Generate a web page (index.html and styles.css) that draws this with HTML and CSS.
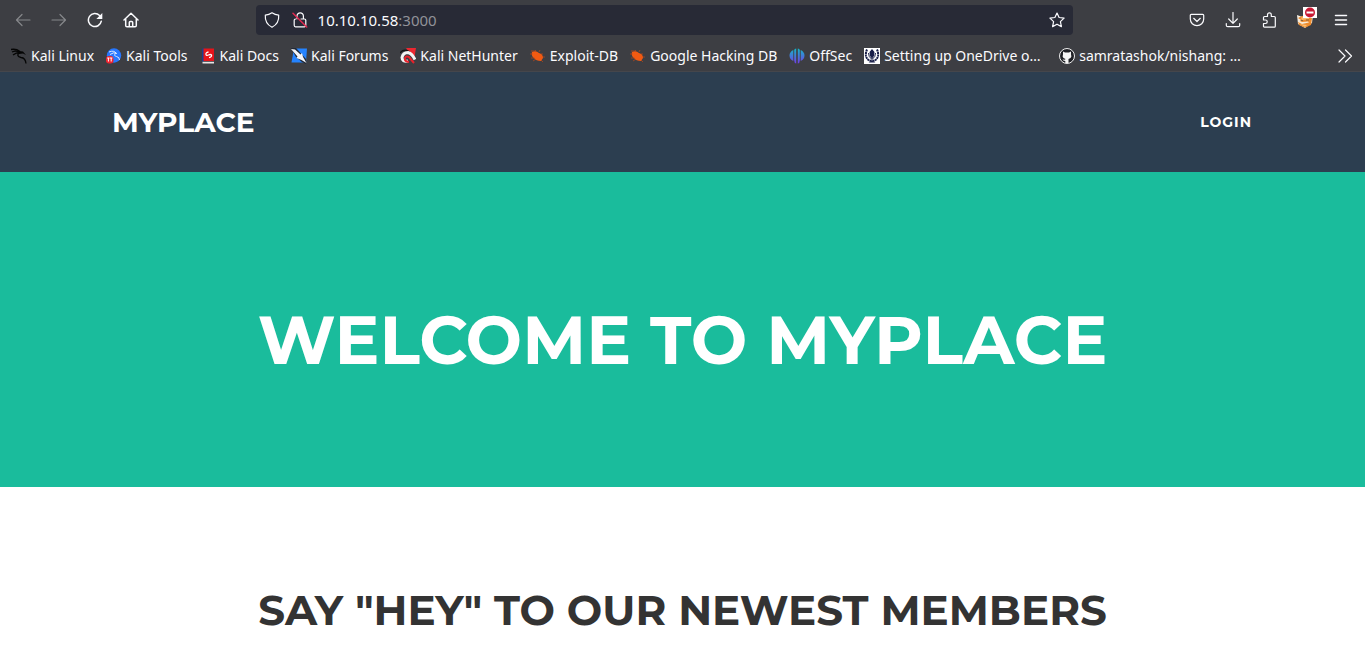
FILE: index.html
```html
<!DOCTYPE html>
<html lang="en">
<head>
<meta charset="utf-8">
<title>MyPlace</title>
<link rel="stylesheet" href="styles.css">
</head>
<body>
<div class="browser">
  <div class="toolbar">
    <div class="tool-group">
      <button class="tool dim" aria-label="Back"><svg class="line" viewBox="0 0 16 16"><path d="M15 8H1.500M7 2.500 1.500 8 7 13.500"/></svg></button>
      <button class="tool dim" aria-label="Forward"><svg class="line" viewBox="0 0 16 16"><path d="M1 8h13.500M9 2.500 14.500 8 9 13.500"/></svg></button>
      <button class="tool" aria-label="Reload"><svg class="line bold" viewBox="0 0 16 16"><path d="M14.300 9.200A6.500 6.500 0 1 1 12.600 3.600"/><path class="solid" d="M15.300 1v6H9.300z"/></svg></button>
      <button class="tool" aria-label="Home"><svg class="line bold" viewBox="0 0 16 16"><path d="M1 8 8 1.300 15 8M2.700 7v6.500q0 1.300 1.300 1.300h8q1.300 0 1.300-1.300V7M6.300 14.500v-4q0-1 1-1h1.400q1 0 1 1v4"/></svg></button>
    </div>
    <div class="address">
      <button class="mini" aria-label="Tracking protection"><svg class="line" viewBox="0 0 16 16"><path d="M8 .8q3 2 6.700 2.300Q15.300 11.500 8 15.300.700 11.500 1.300 3.100 5 2.800 8 .8z"/></svg></button>
      <button class="mini" aria-label="Connection not secure"><svg class="line" viewBox="0 0 16 16"><path d="M5 6.800V4a3.200 3.200 0 0 1 6.400 0v2.800M9 7h3.500q1.300 0 1.300 1.300v5q0 1.500-1.300 1.500h-9q-1.300 0-1.300-1.500v-5Q2.200 7 3.500 7"/><path class="slash" d="M1 1.300 14.700 15"/></svg></button>
      <div class="url">10.10.10.58<span class="port">:3000</span></div>
      <button class="mini" aria-label="Bookmark this page"><svg class="line" viewBox="0 0 16 16"><path d="m8 1 2.100 4.500 5 .6-3.700 3.500 1 5L8 12.200l-4.400 2.400 1-5L.9 6.100l5-.6z"/></svg></button>
    </div>
    <div class="tool-group actions">
      <button class="tool" aria-label="Save to Pocket"><svg class="line" viewBox="0 0 16 16"><path d="M2.300 2.300h11.400q1 0 1 1V7a6.700 6.700 0 0 1-13.400 0V3.300q0-1 1-1zM4.700 6.300 8 9.500l3.300-3.200"/></svg></button>
      <button class="tool" aria-label="Downloads"><svg class="line" viewBox="0 0 16 16"><path d="M8 .5V11M3.700 7 8 11.300 12.300 7M1.300 11.500v1.700q0 1.500 1.500 1.500h10.400q1.500 0 1.500-1.500v-1.700"/></svg></button>
      <button class="tool" aria-label="Extensions"><svg class="line" viewBox="0 0 16 16"><path d="M2.500 8V5.500q0-1 1-1h3V2.700a1.900 1.900 0 0 1 3.800 0v1.800h3q1 0 1 1v8.700q0 1-1 1H3.500q-1 0-1-1v-2.700h2a1.750 1.750 0 0 0 0-3.500z"/></svg></button>
      <button class="tool fox" aria-label="Proxy, disabled"><svg viewBox="0 0 16 16"><path fill="#f7f0e4" d="m0 3 4 1.500h9L16 3l-1 8-7 5-7-4z"/><path fill="#ee8b2d" d="m1 6 4-2h7l3 2-1 7-6 2.800L2 13l-1-3 3-2z"/><path fill="#f9bd70" d="m4 5.500 8-1v2.500l-7 1zM3 12l7 1-2 2z"/><path fill="#f7ead6" d="m1 8 4 2 6-.5 1 1-7 1.500-4-2z"/><path fill="#8c6538" d="M4 8h2v1H4zM9 7.500h3v1H9z"/></svg><svg class="badge" viewBox="0 0 14 11"><path fill="#fff" d="M0 0h14v11H0z"/><circle cx="7" cy="5.500" r="5" fill="#c81934"/><path fill="#fff" d="M3.500 4.500h7v2h-7z"/></svg></button>
      <button class="tool" aria-label="Menu"><svg class="line bold" viewBox="0 0 16 16"><path d="M2.500 3.500h11M2.500 8h11M2.500 12.500h11"/></svg></button>
    </div>
  </div>
  <nav class="bookmarks" aria-label="Bookmarks">
    <a class="mark" href="#"><svg viewBox="0 0 16 16"><path fill="none" stroke="#050505" stroke-width="1.300" d="M0 1.500Q5 .5 9 3.500M1 4q4-2 7.500.500M2 7q3-2.500 7-2.500M8 4.500Q5 8.500 10 9.500 14.500 10 15 15.500"/><path fill="#050505" d="m8 3 4 .5L15 7l-3-1.500-4 .5z"/></svg><span>Kali Linux</span></a>
    <a class="mark" href="#"><svg viewBox="0 0 16 16"><circle cx="8" cy="7.500" r="7.200" fill="#2777ff"/><path fill="none" stroke="#dbe9ff" d="M3 4q5-2 7 1M4 6.500q4-3 7-1M9.500 5q-2 3 1 3.500 3 .500 3 3.500"/><rect y="8" width="7.500" height="7.500" rx="3" fill="#ee2430"/><path fill="none" stroke="#fff" d="M1.200 10h2.400M2.400 10v3.500M4 10h2.400M5.200 10v3.500"/></svg><span>Kali Tools</span></a>
    <a class="mark" href="#"><svg viewBox="0 0 16 16"><path fill="#183f91" d="M2 .5h2v13H2z"/><path fill="#e5141b" d="M3.500.5H14V13H3.500z"/><path fill="#e9e4e4" d="M2.500 13.800H14V15.500H2.500z"/><path fill="none" stroke="#fff" stroke-width="1.300" d="M8.500 4Q5.500 4.500 6 6.500q.5 1.500 2.500.500T11.500 7q.5 2-2.500 2.500"/></svg><span>Kali Docs</span></a>
    <a class="mark" href="#"><svg viewBox="0 0 16 16"><path fill="#2583ff" d="M3 .5h13l-1 14H.5z"/><path fill="#222936" d="M0 0h5l10 11v5l-4-2L5 9z"/><path fill="#f3f5fa" d="m0 1 4 .5 5.500 5L11 5l1 4 3.500 6-5-3-5-2 1-1.500z"/></svg><span>Kali Forums</span></a>
    <a class="mark" href="#"><svg viewBox="0 0 16 16"><path fill="#ec2730" d="M6 0h10l-2 12-3-5z"/><path fill="none" stroke="#151515" stroke-width="1.200" d="M0 5q4-5 10-1"/><path fill="none" stroke="#f4f4f4" stroke-width="3" d="M8 13Q2 14 2 9.500 3 4.500 8 4.500q4 1 7 7"/><path fill="none" stroke="#e7222b" stroke-width="2" d="M9 14Q4 13.500 5 10q1-2.500 4-1l5 6"/></svg><span>Kali NetHunter</span></a>
    <a class="mark" href="#"><svg viewBox="0 0 16 16"><path fill="#f15a12" d="M2 4q4-2 7 1 4 1 4 5l-2 3q-5 0-7-3Q1 8 2 4z"/><path fill="none" stroke="#d34b10" stroke-width=".6" d="M1 3h4l1-1M0 6h3M1 10h4M3 13l3-2M9 4l1-2M11 6h2M13 9h2M11 12l2 2"/></svg><span>Exploit-DB</span></a>
    <a class="mark" href="#"><svg viewBox="0 0 16 16"><path fill="#f15a12" d="M2 4q4-2 7 1 4 1 4 5l-2 3q-5 0-7-3Q1 8 2 4z"/><path fill="none" stroke="#d34b10" stroke-width=".6" d="M1 3h4l1-1M0 6h3M1 10h4M3 13l3-2M9 4l1-2M11 6h2M13 9h2M11 12l2 2"/></svg><span>Google Hacking DB</span></a>
    <a class="mark" href="#"><svg viewBox="0 0 16 16"><defs><linearGradient id="teal-violet" gradientUnits="userSpaceOnUse" x1="0" y1="1" x2="0" y2="15"><stop stop-color="#15b4c9"/><stop offset="1" stop-color="#7040e5"/></linearGradient></defs><path fill="url(#teal-violet)" d="M7.200.5v15q-2-.5-2-3V2Q5.500.800 7.200.5zM8.800.5v15q2-.5 2-3V2Q10.500.800 8.800.5zM4.300 2v11Q.5 11 .5 7.500T4.300 2zM11.700 2v11q3.800-2 3.800-5.500T11.700 2z"/></svg><span>OffSec</span></a>
    <a class="mark clipped" href="#"><svg viewBox="0 0 16 16"><path fill="#fff" d="M0 0h16v16H0z"/><path fill="#171d48" d="m8 1 2.500 3-.5 4-1.500 2v3l3 1.500h-7l3-1.500v-3L6 8l-.5-4z"/><path fill="none" stroke="#171d48" stroke-width="2" stroke-dasharray="2 .5" d="M3 1.500Q1.500 5 2 8q1 4.500 5.500 5M13 1.500q1.500 3.500 1 6.500-1 4.500-5.500 5"/><path fill="none" stroke="#171d48" d="M4.500 5q0 4 3 6M11.500 5q0 4-3 6"/></svg><span>Setting up OneDrive o…</span></a>
    <a class="mark clipped" href="#"><svg viewBox="0 0 16 16"><circle cx="8" cy="8" r="7.500" fill="#202126" stroke="#eee"/><path fill="#f6f6f6" d="M4 3.500 6 4.500h4l2-1v3q1 2-.5 3.500l-2 1V15H6.300v-2l-2-.5-.8-1 2.500.3L6.500 11l-2-1Q3 8.500 4 6.500z"/></svg><span>samratashok/nishang: …</span></a>
    <button class="overflow" aria-label="More bookmarks"><svg class="line" viewBox="0 0 16 16"><path d="m2 2 6 6-6 6M8.500 2l6 6-6 6"/></svg></button>
  </nav>
</div>
<header class="site-header">
  <a class="brand" href="#">MYPLACE</a>
  <a class="login" href="#">LOGIN</a>
</header>
<main>
  <section class="hero"><h1>WELCOME TO MYPLACE</h1></section>
  <section class="members"><h2>SAY "HEY" TO OUR NEWEST MEMBERS</h2></section>
</main>
</body>
</html>
```
FILE: styles.css
```css
* { box-sizing: border-box; }
body {
  margin: 0;
  background: #fff;
  color: #333;
  font-family: Montserrat, Inter, sans-serif;
}
h1, h2 { margin: 0; font-weight: 700; }
a { color: inherit; text-decoration: none; }
button { padding: 0; border: 0; background: none; color: inherit; }
svg { display: block; width: 16px; height: 16px; flex: none; }

.browser {
  background: #3d3e43;
  color: #fbfbfe;
  font-family: "Noto Sans", sans-serif;
  font-size: 14px;
  border-bottom: 1px solid #45464b;
}
.line { fill: none; stroke: currentColor; stroke-width: 1.2; stroke-linecap: round; stroke-linejoin: round; }
.bold { stroke-width: 1.5; }
.solid { fill: currentColor; stroke: none; }
.slash { stroke: #e22850; stroke-width: 1.5; }

.toolbar {
  display: grid;
  grid-template-columns: 7fr minmax(0, 817px) 8fr;
  align-items: center;
  height: 40px;
  padding: 0 6px 0 5px;
}
.tool-group { display: flex; }
.actions { justify-content: flex-end; }
.tool { display: grid; place-items: center; width: 36px; height: 36px; position: relative; }
.dim { color: #86878b; }
.fox .badge { position: absolute; top: 5px; right: 6px; width: 14px; height: 11px; }
.address {
  display: flex;
  align-items: center;
  gap: 12px;
  height: 30px;
  padding: 0 8px;
  border-radius: 4px;
  background: #282a36;
}
.url { flex: 1; margin-left: -2px; font-size: 15px; }
.port { color: #919299; }

.bookmarks {
  display: flex;
  align-items: center;
  gap: 12px;
  height: 31px;
  padding: 0 12px 0 11px;
  white-space: nowrap;
}
.mark { display: flex; align-items: center; gap: 4px; }
.clipped { min-width: 183px; }
.overflow { margin-left: auto; }

.site-header {
  display: flex;
  align-items: center;
  justify-content: space-between;
  height: 100px;
  padding: 0 113px 0 112px;
  background: #2c3e50;
  color: #fff;
  font-weight: 700;
}
.brand { font-size: 28px; }
.login { font-size: 14px; letter-spacing: 1px; }
.hero {
  padding: 128px 24px 107px;
  background: #1abc9c;
  color: #fff;
  text-align: center;
}
.hero h1 { font-size: 67px; line-height: 80px; }
.members { padding: 98px 24px 16px; text-align: center; }
.members h2 { font-size: 42px; line-height: 50px; }
```
